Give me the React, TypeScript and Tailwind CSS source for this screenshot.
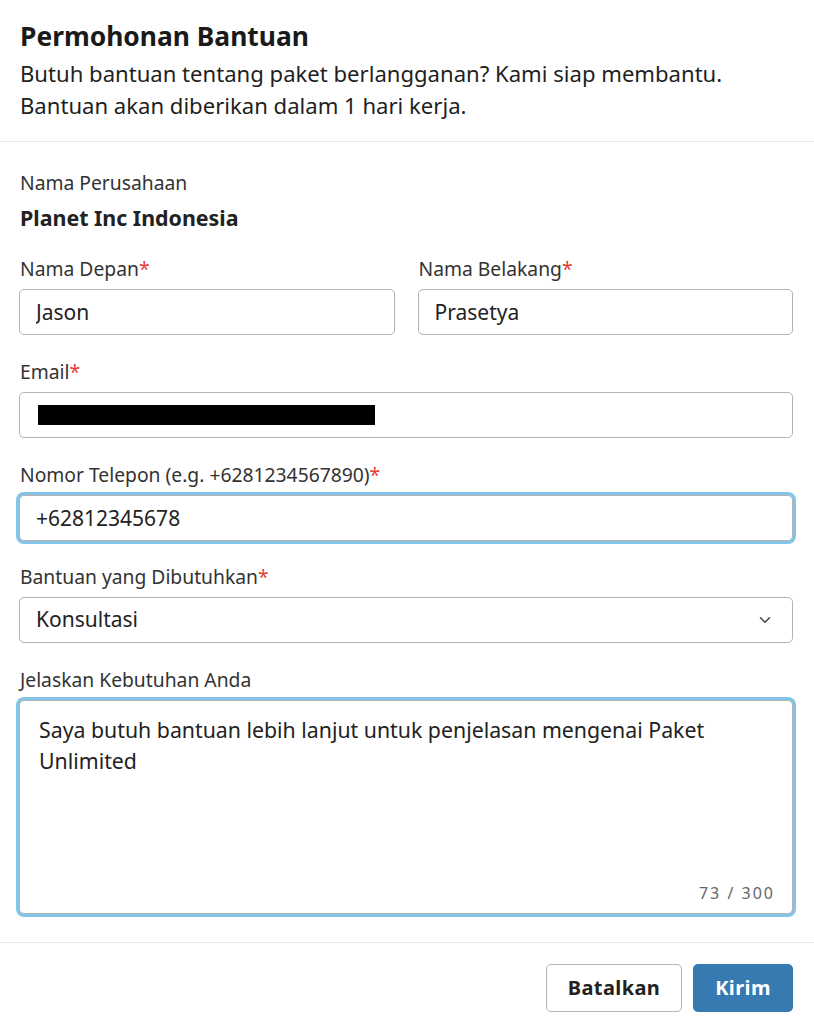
import { ChevronDown } from "lucide-react";

const inputCls =
  "block h-[46px] w-full rounded-[5px] border border-[#b3b3b3] bg-white px-[16px] text-[21px] text-[#222] outline-none";

const focusCls = "ring-[3px] ring-[#82c5e8]";

const MESSAGE = "Saya butuh bantuan lebih lanjut untuk penjelasan mengenai Paket Unlimited";

export default function App() {
  return (
    <div className="min-h-screen w-full bg-white font-['Noto_Sans',sans-serif] text-[#222]">
      <header className="border-b border-[#e8e8e8] px-5 pb-[20px] pt-[18px]">
        <h1 className="text-[26.4px] font-bold leading-[36px] text-[#1a1a1a]">Permohonan Bantuan</h1>
        <p className="mt-[3px] text-[22.1px] leading-[32px] text-[#1f1f1f]">
          Butuh bantuan tentang paket berlangganan? Kami siap membantu.
          <br />
          Bantuan akan diberikan dalam 1 hari kerja.
        </p>
      </header>

      <div className="pb-[28px] pl-[19px] pr-[21px] pt-[27px]">
        <p className="pl-px text-[19.3px] leading-[28px] text-[#333]">Nama Perusahaan</p>
        <p className="mt-[7px] pl-px text-[21.4px] font-bold leading-[28px] text-[#222]">Planet Inc Indonesia</p>

        <div className="mt-[23px] grid grid-cols-2 gap-[23px]">
          <Field label="Nama Depan" required>
            <input type="text" defaultValue="Jason" className={inputCls} />
          </Field>
          <Field label="Nama Belakang" required>
            <input type="text" defaultValue="Prasetya" className={inputCls} />
          </Field>
        </div>

        <div className="mt-[23px]">
          <Field label="Email" required>
            <div className={`${inputCls} flex items-center px-[18px]`}>
              <span className="block h-[20px] w-[337px] bg-black" />
            </div>
          </Field>
        </div>

        <div className="mt-[23px]">
          <Field label="Nomor Telepon (e.g. +6281234567890)" required>
            <input type="tel" defaultValue="+62812345678" className={`${inputCls} ${focusCls}`} />
          </Field>
        </div>

        <div className="mt-[22px]">
          <Field label="Bantuan yang Dibutuhkan" required>
            <div className="relative">
              <select defaultValue="konsultasi" className={`${inputCls} appearance-none`}>
                <option value="konsultasi">Konsultasi</option>
              </select>
              <ChevronDown className="pointer-events-none absolute right-[19px] top-1/2 size-[18px] -translate-y-1/2 text-[#444]" strokeWidth={2} />
            </div>
          </Field>
        </div>

        <div className="mt-[23px]">
          <Field label="Jelaskan Kebutuhan Anda">
            <div className="relative">
              <textarea
                defaultValue={MESSAGE}
                className={`block h-[214px] w-full resize-none rounded-[5px] border border-[#b3b3b3] bg-white px-[19px] pt-[13px] text-[21.3px] leading-[31px] text-[#222] outline-none ${focusCls}`}
              />
              <span className="pointer-events-none absolute bottom-[9px] right-[18px] text-[16px] tracking-[2px] text-[#666]">
                {MESSAGE.length} / 300
              </span>
            </div>
          </Field>
        </div>
      </div>

      <footer className="flex justify-end gap-[11px] border-t border-[#e8e8e8] pb-[14px] pl-5 pr-[21px] pt-[21px]">
        <button
          type="button"
          className="h-[48px] w-[136px] rounded-[5px] border border-[#b3b3b3] bg-white text-[20px] font-bold tracking-[0.4px] text-[#222]"
        >
          Batalkan
        </button>
        <button
          type="button"
          className="h-[48px] w-[100px] rounded-[5px] bg-[#3779b1] text-[20px] font-bold tracking-[0.4px] text-white"
        >
          Kirim
        </button>
      </footer>
    </div>
  );
}

function Field({ label, required, children }: { label: string; required?: boolean; children: React.ReactNode }) {
  return (
    <label className="block">
      <span className="mb-[6px] block pl-px text-[19.3px] leading-[28px] text-[#333]">
        {label}
        {required && <span className="text-[#e53935]">*</span>}
      </span>
      {children}
    </label>
  );
}
